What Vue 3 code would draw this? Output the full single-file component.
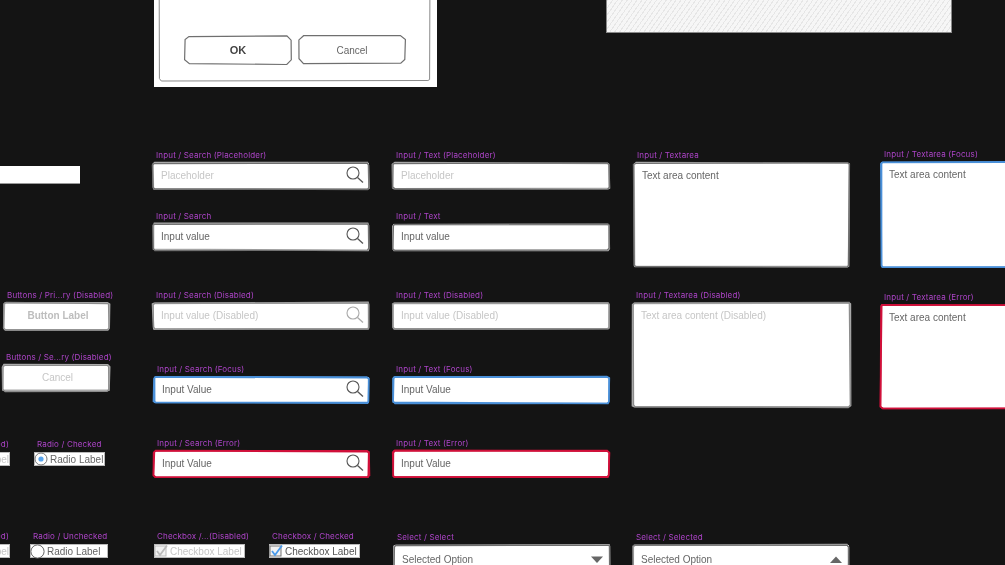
<script setup>
function rng(seed) {
  let s = seed * 9301 + 49297
  return () => {
    s = (s * 9301 + 49297) % 233280
    return s / 233280
  }
}
function frame(w, h, seed, cut = 1.5, amp = 0.7) {
  const r = rng(seed)
  const j = () => ((r() - 0.5) * 2 * amp).toFixed(1) * 1
  const p = [
    [cut + j(), j()], [w - cut + j(), j()], [w + j(), cut + j()],
    [w + j(), h - cut + j()], [w - cut + j(), h + j()], [cut + j(), h + j()],
    [j(), h - cut + j()], [j(), cut + j()]
  ]
  return 'M' + p.map((q) => q.join(' ')).join('L') + 'Z'
}
const fields = [
  { label: 'Input / Search (Placeholder)', x: 153, y: 163, w: 216, h: 26, text: 'Placeholder', tone: 'faint', icon: 'search' },
  { label: 'Input / Search', x: 153, y: 224, w: 216, h: 26, text: 'Input value', tone: 'normal', icon: 'search' },
  { label: 'Input / Search (Disabled)', x: 153, y: 303, w: 216, h: 26, text: 'Input value (Disabled)', tone: 'faint', icon: 'search', dim: true },
  { label: 'Input / Search (Focus)', x: 154, y: 377, w: 215, h: 26, text: 'Input Value', tone: 'normal', icon: 'search', state: 'focus' },
  { label: 'Input / Search (Error)', x: 154, y: 451, w: 215, h: 26, text: 'Input Value', tone: 'normal', icon: 'search', state: 'error' },
  { label: 'Input / Text (Placeholder)', x: 393, y: 163, w: 216, h: 26, text: 'Placeholder', tone: 'faint' },
  { label: 'Input / Text', x: 393, y: 224, w: 216, h: 26, text: 'Input value', tone: 'normal' },
  { label: 'Input / Text (Disabled)', x: 393, y: 303, w: 216, h: 26, text: 'Input value (Disabled)', tone: 'faint', dim: true },
  { label: 'Input / Text (Focus)', x: 393, y: 377, w: 216, h: 26, text: 'Input Value', tone: 'normal', state: 'focus' },
  { label: 'Input / Text (Error)', x: 393, y: 451, w: 216, h: 26, text: 'Input Value', tone: 'normal', state: 'error' },
  { label: 'Input / Textarea', x: 634, y: 163, w: 215, h: 104, text: 'Text area content', tone: 'normal', area: true },
  { label: 'Input / Textarea (Focus)', x: 881, y: 162, w: 200, h: 105, text: 'Text area content', tone: 'normal', area: true, state: 'focus' },
  { label: 'Input / Textarea (Disabled)', x: 633, y: 303, w: 217, h: 104, text: 'Text area content (Disabled)', tone: 'faint', area: true, dim: true },
  { label: 'Input / Textarea (Error)', x: 881, y: 305, w: 200, h: 103, text: 'Text area content', tone: 'normal', area: true, state: 'error' },
  { label: 'Buttons / Pri...ry (Disabled)', x: 4, y: 303, w: 105, h: 27, text: 'Button Label', tone: 'bold', center: true, dim: true },
  { label: 'Buttons / Se...ry (Disabled)', x: 3, y: 365, w: 106, h: 26, text: 'Cancel', tone: 'faint', center: true, dim: true },
  { label: 'Select / Select', x: 394, y: 545, w: 216, h: 30, text: 'Selected Option', tone: 'normal', icon: 'down' },
  { label: 'Select / Selected', x: 633, y: 545, w: 216, h: 30, text: 'Selected Option', tone: 'normal', icon: 'up' }
].map((f, i) => ({ ...f, path: frame(f.w, f.h, i + 3), path2: frame(f.w, f.h, i + 31) }))

const choices = [
  { label: 'Radio / ...(Disabled)', x: -70, y: 452, w: 80, text: 'Radio Label', kind: 'none', tone: 'faint', gap: 6 },
  { label: 'Radio / Checked', x: 34, y: 452, w: 71, text: 'Radio Label', kind: 'radio-on', tone: 'normal' },
  { label: 'Radio / ...(Disabled)', x: -70, y: 544, w: 80, text: 'Radio Label', kind: 'none', tone: 'faint', gap: 6 },
  { label: 'Radio / Unchecked', x: 30, y: 544, w: 78, text: 'Radio Label', kind: 'radio-off', tone: 'normal' },
  { label: 'Checkbox /...(Disabled)', x: 154, y: 544, w: 91, text: 'Checkbox Label', kind: 'check-off', tone: 'faint' },
  { label: 'Checkbox / Checked', x: 269, y: 544, w: 91, text: 'Checkbox Label', kind: 'check-on', tone: 'dark' }
]

const dialogFrame = frame(271, 87, 5, 2, 0.6)
const okFrame = frame(106, 28, 8, 4, 0.7)
const cancelFrame = frame(106, 27, 11, 4, 0.7)

function place(f) {
  return { left: f.x + 'px', top: f.y - 13 + 'px', width: f.w + 'px' }
}
function size(f) {
  return { height: f.h + 'px' }
}
</script>

<template>
  <div class="canvas">
    <section class="dialog">
      <svg class="sketch" viewBox="0 0 283 92" width="283" height="92">
        <path :d="dialogFrame" transform="translate(5 -1)" class="line thin" />
      </svg>
      <div class="dialog-actions">
        <div class="dialog-btn">
          <svg class="sketch" width="106" height="28"><path :d="okFrame" class="line" /></svg>
          <span class="ok">OK</span>
        </div>
        <div class="dialog-btn">
          <svg class="sketch" width="106" height="28"><path :d="cancelFrame" class="line" /></svg>
          <span class="tone-normal">Cancel</span>
        </div>
      </div>
    </section>

    <div class="hatch"></div>
    <div class="bar"></div>

    <div v-for="f in fields" :key="f.label" class="item" :style="place(f)">
      <div class="label">{{ f.label }}</div>
      <div class="field" :class="{ area: f.area, center: f.center }" :style="size(f)">
        <svg class="sketch" width="100%" height="100%">
          <path :d="f.path2" class="line soft" :class="f.state" />
          <path :d="f.path" class="line" :class="[f.state, { dim: f.dim }]" />
        </svg>
        <span class="value" :class="'tone-' + f.tone">{{ f.text }}</span>
        <svg v-if="f.icon === 'search'" class="icon" :class="{ faded: f.dim }" width="18" height="18" viewBox="0 0 18 18">
          <circle cx="7" cy="7" r="6" fill="none" stroke="#555" stroke-width="1.1" />
          <path d="M11.5 11.5 L17 16.5" stroke="#555" stroke-width="1.3" fill="none" />
        </svg>
        <svg v-else-if="f.icon === 'down'" class="icon arrow" width="14" height="9" viewBox="0 0 14 9">
          <path d="M1 1.5 L13 1.5 L7 8 Z" fill="#666" />
        </svg>
        <svg v-else-if="f.icon === 'up'" class="icon arrow" width="14" height="9" viewBox="0 0 14 9">
          <path d="M1 8 L13 8 L7 1.5 Z" fill="#666" />
        </svg>
      </div>
    </div>

    <div v-for="(c, i) in choices" :key="i" class="item" :style="place(c)">
      <div class="label" :class="{ 'label-right': c.kind === 'none' }">{{ c.label }}</div>
      <div class="choice">
        <svg v-if="c.kind === 'radio-on'" width="14" height="14" viewBox="0 0 14 14" class="mark">
          <circle cx="7" cy="7" r="6" fill="#fff" stroke="#777" />
          <circle cx="7" cy="7" r="2.6" fill="#5aa6ee" />
        </svg>
        <svg v-else-if="c.kind === 'radio-off'" width="15" height="15" viewBox="0 0 15 15" class="mark">
          <circle cx="7.5" cy="7.5" r="6.6" fill="#fff" stroke="#666" />
        </svg>
        <svg v-else-if="c.kind === 'check-off'" width="14" height="14" viewBox="0 0 14 14" class="mark">
          <rect x="1" y="2" width="11" height="10" fill="#f2f2f2" stroke="#bbb" />
          <path d="M3 7 L6 11 L13 1.5" fill="none" stroke="#bbb" stroke-width="1.8" />
        </svg>
        <svg v-else-if="c.kind === 'check-on'" width="14" height="14" viewBox="0 0 14 14" class="mark">
          <rect x="1" y="2" width="11" height="10" fill="#f2f2f2" stroke="#777" />
          <path d="M3 7 L6 11 L13 1.5" fill="none" stroke="#4a9aea" stroke-width="1.8" />
        </svg>
        <span class="value" :class="['tone-' + c.tone, { 'push-end': c.kind === 'none' }]">{{ c.text }}</span>
      </div>
    </div>
  </div>
</template>

<style>
html, body {
  margin: 0;
  background: #141414;
}
</style>

<style scoped>
.canvas {
  position: relative;
  width: 1005px;
  height: 565px;
  overflow: hidden;
  background: #141414;
  font-family: "Liberation Sans", Arial, sans-serif;
  filter: blur(0.35px);
}
.item {
  position: absolute;
  display: flex;
  flex-direction: column;
}
.label {
  height: 10px;
  line-height: 10px;
  margin: 0 0 3px 3px;
  font-family: Inter, "Liberation Sans", sans-serif;
  font-size: 8px;
  letter-spacing: 0.02em;
  color: #ad44c8;
  white-space: nowrap;
}
.label-right {
  margin-left: 0;
  text-align: right;
  margin-right: 1px;
}
.field {
  position: relative;
  display: flex;
  align-items: center;
  padding: 0 5px 2px 8px;
  background: #fff;
  box-sizing: border-box;
  font-size: 10px;
}
.field.area {
  align-items: flex-start;
  padding-top: 7px;
}
.field.center {
  justify-content: center;
  font-size: 10px;
}
.sketch {
  position: absolute;
  inset: 0;
  overflow: visible;
  pointer-events: none;
}
.line {
  fill: none;
  stroke: #6f6f6f;
  stroke-width: 1.2;
}
.line.soft {
  stroke: #aaa;
  stroke-width: 1.6;
}
.line.thin {
  stroke: #8a8a8a;
  stroke-width: 1;
}
.line.dim {
  stroke: #8c8c8c;
}
.line.focus,
.line.soft.focus {
  stroke: #4a90d9;
  stroke-width: 1.5;
}
.line.error,
.line.soft.error {
  stroke: #d0103a;
  stroke-width: 1.6;
}
.value {
  position: relative;
  white-space: nowrap;
}
.tone-normal { color: #666; }
.tone-dark { color: #555; }
.tone-faint { color: #c6c6c6; }
.tone-bold { color: #bdbdbd; font-weight: 700; }
.icon {
  position: relative;
  margin-left: auto;
  flex: none;
}
.icon.faded { opacity: 0.5; }
.icon.arrow { margin: 0 1px 0 auto; }
.choice {
  display: flex;
  align-items: center;
  gap: 2px;
  height: 14px;
  background: #fff;
  box-shadow: inset 0 0 0 1px #bbb;
  font-size: 10px;
}
.mark { flex: none; }
.push-end {
  margin-left: auto;
  margin-right: 1px;
}
.dialog {
  position: absolute;
  left: 154px;
  top: -5px;
  width: 283px;
  height: 92px;
  box-sizing: border-box;
  background: #fff;
  display: flex;
  align-items: flex-end;
  padding: 0 32px 23px 31px;
}
.dialog-actions {
  display: flex;
  gap: 8px;
}
.dialog-btn {
  position: relative;
  width: 106px;
  height: 28px;
  display: flex;
  align-items: center;
  justify-content: center;
  font-size: 10px;
}
.ok {
  font-weight: 700;
  font-size: 11px;
  color: #444;
}
.hatch {
  position: absolute;
  left: 606px;
  top: -5px;
  width: 346px;
  height: 38px;
  box-sizing: border-box;
  border: 1px solid #8a8a8a;
  border-width: 0 1px 1.5px 1px;
  background: repeating-linear-gradient(-55deg, #f6f6f6 0 3px, #e6e6e6 3px 4px);
}
.bar {
  position: absolute;
  left: 0;
  top: 166px;
  width: 80px;
  height: 18px;
  background: #fff;
  border-bottom: 1px solid #999;
  box-sizing: border-box;
}
</style>
